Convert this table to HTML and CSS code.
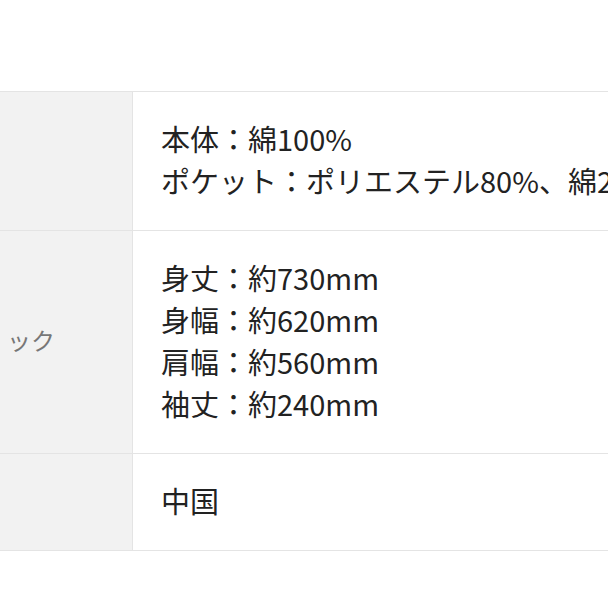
FILE: index.html
```html
<!DOCTYPE html>
<html lang="ja">
<head>
<meta charset="utf-8">
<link rel="stylesheet" href="styles.css">
</head>
<body>
<div class="page">
  <div class="spec">
    <div class="row">
      <div class="label"></div>
      <div class="value">
        <div>本体：綿100%</div>
        <div>ポケット：ポリエステル80%、綿20%</div>
      </div>
    </div>
    <div class="row">
      <div class="label"><span>ック</span></div>
      <div class="value">
        <div>身丈：約730mm</div>
        <div>身幅：約620mm</div>
        <div>肩幅：約560mm</div>
        <div>袖丈：約240mm</div>
      </div>
    </div>
    <div class="row">
      <div class="label"></div>
      <div class="value">
        <div>中国</div>
      </div>
    </div>
  </div>
</div>
</body>
</html>
```
FILE: styles.css
```css
html, body {
  margin: 0;
  padding: 0;
  background: #ffffff;
  overflow: hidden;
}
.page {
  padding-top: 91px;
  width: 900px;
  font-family: "Noto Sans CJK JP", "Noto Sans", sans-serif;
}
.spec {
  border-top: 1px solid #e4e4e4;
}
.row {
  display: grid;
  grid-template-columns: 133px 1fr;
  border-bottom: 1px solid #e4e4e4;
}
.label {
  background: #f2f2f2;
  border-right: 1px solid #e4e4e4;
  display: flex;
  align-items: center;
  padding-left: 7px;
  padding-bottom: 6px;
  color: #777777;
  font-size: 24px;
}
.value {
  padding: 25px 27px 29px 28px;
  font-size: 29px;
  line-height: 42px;
  color: #222222;
  white-space: nowrap;
}
```
